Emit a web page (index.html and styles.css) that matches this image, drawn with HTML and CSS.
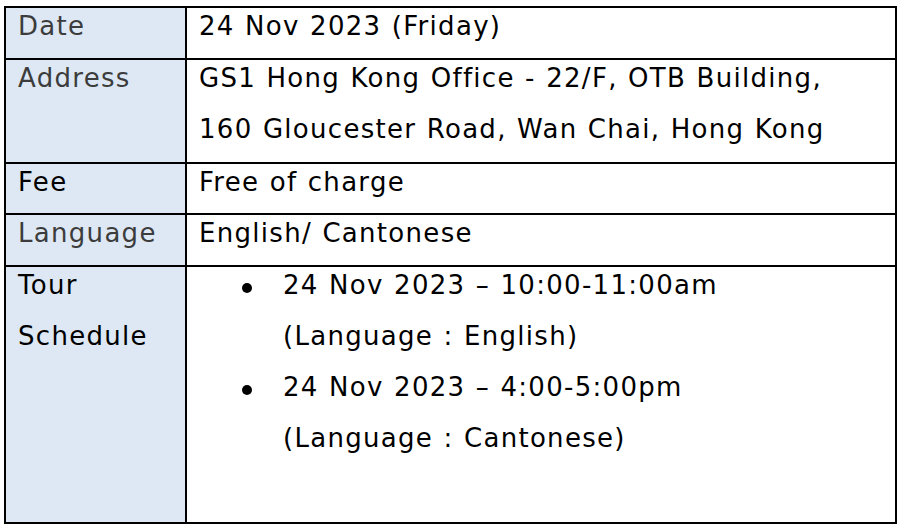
FILE: index.html
```html
<!DOCTYPE html>
<html lang="en">
<head>
<meta charset="utf-8">
<title>Tour details</title>
<link rel="stylesheet" href="styles.css">
</head>
<body>
<div class="info-table">
  <div class="cell label muted row-date"><p>Date</p></div>
  <div class="cell value"><p>24 Nov 2023 (Friday)</p></div>

  <div class="cell label muted"><p>Address</p></div>
  <div class="cell value"><p>GS1 Hong Kong Office - 22/F, OTB Building,<br>160 Gloucester Road, Wan Chai, Hong Kong</p></div>

  <div class="cell label"><p>Fee</p></div>
  <div class="cell value"><p>Free of charge</p></div>

  <div class="cell label muted"><p>Language</p></div>
  <div class="cell value"><p>English/ Cantonese</p></div>

  <div class="cell label"><p>Tour<br>Schedule</p></div>
  <div class="cell value">
    <ul class="schedule">
      <li><span>24 Nov 2023 – 10:00-11:00am<br>(Language : English)</span></li>
      <li><span>24 Nov 2023 – 4:00-5:00pm<br>(Language : Cantonese)</span></li>
    </ul>
  </div>
</div>
</body>
</html>
```

FILE: styles.css
```css
html, body {
  margin: 0;
  padding: 0;
  background: #ffffff;
}

body {
  padding: 6px 0 0 4px;
  font-family: "DejaVu Sans", Verdana, sans-serif;
  font-size: 26px;
  letter-spacing: 1.3px;
  word-spacing: 0.8px;
  color: #000;
}

.info-table {
  width: 893px;
  box-sizing: border-box;
  display: grid;
  grid-template-columns: 179px 708px;
  grid-template-rows: 50px 102px 49px 50px 255px;
  gap: 2px;
  padding: 2px;
  background: #000;
}

.cell {
  padding: 0 12px;
  overflow: hidden;
}

.cell p {
  margin: -7px 0 0;
  line-height: 51px;
}

.label {
  background: #dde8f4;
  color: #000;
}

.label.muted {
  color: #3c3c3c;
}

.value {
  background: #ffffff;
}

.schedule {
  list-style: none;
  margin: -7px 0 0;
  padding: 0;
  line-height: 51px;
}

.schedule li {
  display: flex;
  align-items: flex-start;
}

.schedule li::before {
  content: "";
  flex: none;
  width: 10px;
  height: 10px;
  border-radius: 50%;
  background: #000;
  margin: 23px 31px 0 43px;
}
```
